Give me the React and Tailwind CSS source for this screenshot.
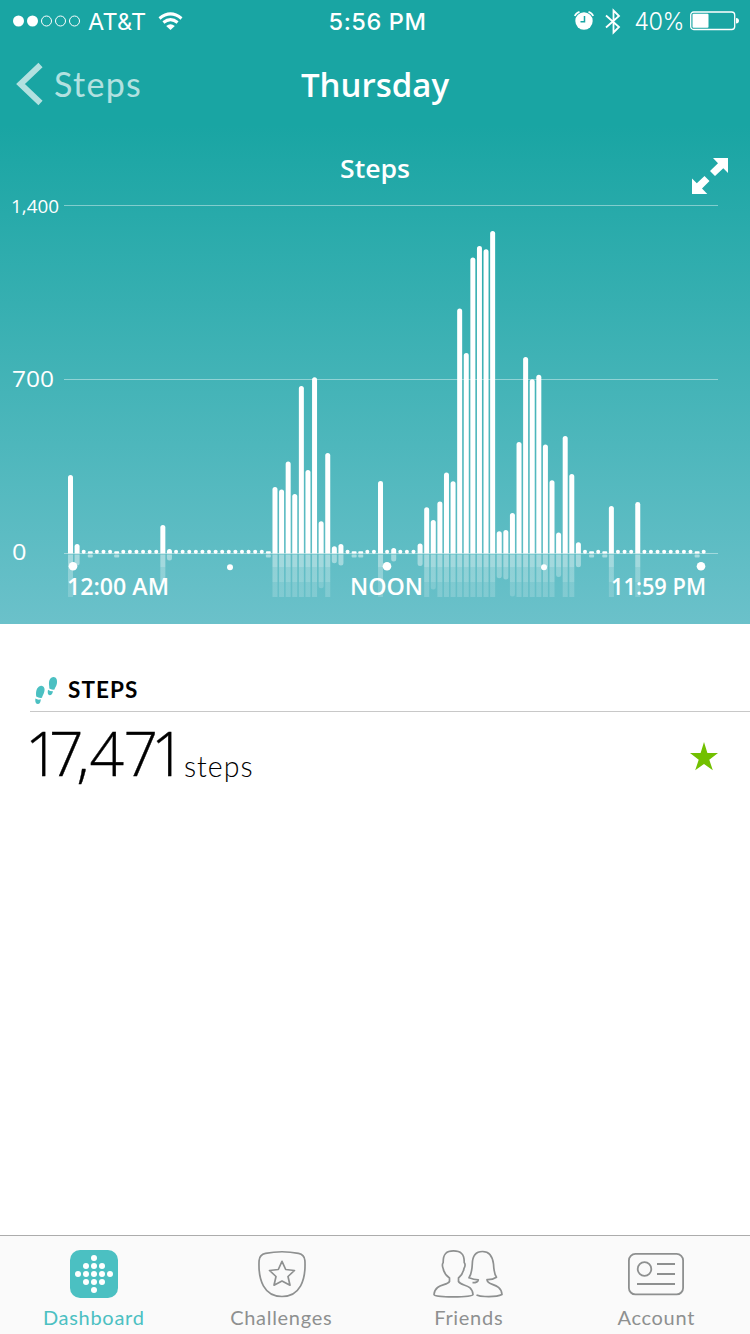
import React from 'react';

const BASE = 553.5;
const FIRST_X = 70.5;
const PITCH = 6.596;

// Top edge of each quarter-hour bar, keyed by its slot; slots left out have no steps.
const TOPS = {
  0: 475, 1: 544, 14: 525, 15: 549, 31: 487, 32: 489.5, 33: 461.5, 34: 494, 35: 386,
  36: 470, 37: 377.3, 38: 521.3, 39: 453, 40: 546.3, 41: 544, 47: 481, 49: 548, 53: 543.5,
  54: 507.3, 55: 520, 56: 501.5, 57: 472.5, 58: 481.3, 59: 308.5, 60: 353, 61: 257.5,
  62: 246, 63: 249.3, 64: 231, 65: 531.3, 66: 530, 67: 513, 68: 442, 69: 357, 70: 379.3,
  71: 374.8, 72: 444.5, 73: 480.3, 74: 532.5, 75: 436, 76: 474, 77: 542.2, 82: 506, 86: 502,
};
const FLATS = [3, 7, 30, 43, 44, 79, 81, 95];

function Bars() {
  return Array.from({ length: 97 }, (_, i) => {
    const cx = FIRST_X + i * PITCH;
    const x = cx - 2.5;
    if (FLATS.includes(i)) {
      return (
        <g key={i} fill="#fff">
          <rect x={x} y="551.3" width="5" height="2.2" rx="1" />
          <rect x={x} y="554.5" width="5" height="3" rx="1" opacity=".45" />
        </g>
      );
    }
    if (!(i in TOPS)) return <circle key={i} cx={cx} cy="551.8" r="2" fill="#fff" />;
    const h = BASE - TOPS[i];
    const r = Math.min(h + 2, 60);
    return (
      <g key={i} fill="#fff">
        <path d={`M${x} ${BASE}V${TOPS[i] + 2.5}a2.5 2.5 0 0 1 5 0V${BASE}z`} />
        <rect x={x} y="550" width="5" height={r + 4} rx="2.5" fill="url(#mirror)" clipPath="url(#below)" />
      </g>
    );
  });
}

function Chart() {
  return (
    <svg viewBox="0 128 750 496" className="block h-[496px] w-[750px]" fontFamily="'Open Sans', sans-serif" fill="#fff">
      <defs>
        <linearGradient id="mirror" gradientUnits="userSpaceOnUse" x1="0" y1="554" x2="0" y2="597">
          <stop offset="0" stopColor="#fff" stopOpacity=".42" />
          <stop offset=".31" stopColor="#fff" stopOpacity=".42" />
          <stop offset=".31" stopColor="#fff" stopOpacity=".29" />
          <stop offset=".65" stopColor="#fff" stopOpacity=".29" />
          <stop offset=".65" stopColor="#fff" stopOpacity=".18" />
          <stop offset="1" stopColor="#fff" stopOpacity=".18" />
        </linearGradient>
        <clipPath id="below"><rect x="0" y="554.5" width="750" height="42.5" /></clipPath>
      </defs>
      <path d="M64 205.5H718M64 379.5H718M64 553.5H718" stroke="#fff" strokeOpacity=".42" />
      <Bars />
      <circle cx="73" cy="566.3" r="4.3" />
      <circle cx="230" cy="567.3" r="3" />
      <circle cx="387" cy="566.3" r="4.3" />
      <circle cx="544" cy="567.3" r="3" />
      <circle cx="701" cy="566.3" r="4.3" />
      <text x="340" y="178" fontSize="26" fontWeight="600" textLength="70" lengthAdjust="spacingAndGlyphs">Steps</text>
      <text x="11" y="213" fontSize="19" textLength="48" lengthAdjust="spacingAndGlyphs">1,400</text>
      <text x="12" y="387" fontSize="22.5" textLength="42" lengthAdjust="spacingAndGlyphs">700</text>
      <text x="12" y="560" fontSize="22.5" textLength="14.5" lengthAdjust="spacingAndGlyphs">0</text>
      <g fontSize="22.5" fontWeight="600">
        <text x="67" y="594.5" textLength="102" lengthAdjust="spacingAndGlyphs">12:00 AM</text>
        <text x="350" y="594.5" textLength="73" lengthAdjust="spacingAndGlyphs">NOON</text>
        <text x="611" y="594.5" textLength="95" lengthAdjust="spacingAndGlyphs">11:59 PM</text>
      </g>
      <path d="M713 158H728V173L723.3 168.3L715 176L710 171L718 163.2zM692 178.5L696.8 183.3L704.5 176L709.5 181L702 188.5L707.3 194H692z" />
    </svg>
  );
}

function StatusBar() {
  return (
    <div className="grid h-10 grid-cols-[1fr_auto_1fr] items-center px-3 pt-px font-['Inter',sans-serif] text-[23.5px] leading-[39px]">
      <div className="flex items-center">
        <svg className="h-5 w-[70px]" viewBox="0 0 70 20" fill="none" stroke="#fff">
          <circle cx="6.5" cy="10" r="5.5" fill="#fff" stroke="none" />
          <circle cx="20.5" cy="10" r="5.5" fill="#fff" stroke="none" />
          <circle cx="34.5" cy="10" r="5" />
          <circle cx="48.5" cy="10" r="5" />
          <circle cx="62.5" cy="10" r="5" />
        </svg>
        <span className="ml-[6px] w-[61px] tracking-[0.2px]">AT&amp;T</span>
        <svg className="ml-[9px] h-[18px] w-[25px]" viewBox="0 0 25 18" fill="none" stroke="#fff" strokeWidth="3">
          <path d="M1.5 6.5Q12.5 -2.7 23.5 6.5M5.4 10.5Q12.5 4.7 19.6 10.5" />
          <path d="M8.2 14Q12.5 10.3 16.8 14L12.5 18z" fill="#fff" stroke="none" />
        </svg>
      </div>
      <div className="pl-[5px] font-medium tracking-[0.6px]">5:56 PM</div>
      <div className="-mr-[2px] flex items-center justify-end">
        <svg className="mr-[11px] h-5 w-5" viewBox="0 0 20 20" fill="none" stroke="#fff">
          <circle cx="10" cy="10" r="8.7" fill="#fff" stroke="none" />
          <path d="M.8 5A7 7 0 0 1 5.5 .9M19.2 5A7 7 0 0 0 14.5 .9" strokeWidth="1.7" />
          <path d="M10.5 5V10.7H6.5" stroke="#18a5a3" strokeWidth="1.5" />
        </svg>
        <svg className="mr-[13px] h-[27px] w-4" viewBox="0 0 16 27" fill="none" stroke="#fff" strokeWidth="1.8">
          <path d="M1 7.5L14 19L8.5 24.5V2.5L14 8L1 19.5" />
        </svg>
        <span className="mr-[6px] mt-px text-[23.5px] font-light tracking-[-0.5px]">40%</span>
        <svg className="h-5 w-[50px]" viewBox="0 0 50 20" fill="none" stroke="#fff">
          <rect x=".7" y="1" width="44" height="17.5" rx="3" strokeWidth="1.3" />
          <rect x="2.5" y="2.8" width="16" height="14" rx="1" fill="#fff" stroke="none" />
          <path d="M46 7q3 .3 3 2.8t-3 2.8z" fill="#fff" stroke="none" />
        </svg>
      </div>
    </div>
  );
}

function NavBar() {
  return (
    <div className="grid h-[88px] grid-cols-[1fr_auto_1fr] items-center px-4 text-[34px] leading-[48px]">
      <div className="flex items-center text-[#b2e1e0]">
        <svg className="h-[44px] w-[28px]" viewBox="0 0 28 44" fill="none" stroke="currentColor" strokeWidth="6">
          <path d="M24.5 3L4.5 22L24.5 41" />
        </svg>
        <span className="ml-[10px] font-['Lato',sans-serif] tracking-[1.3px]">Steps</span>
      </div>
      <div className="mt-px font-['Open_Sans',sans-serif] text-[33px] font-semibold">Thursday</div>
    </div>
  );
}

function DashboardIcon() {
  const dots = [[24, 8], [16, 16], [24, 16], [32, 16], [8, 24], [16, 24], [24, 24], [32, 24], [40, 24], [16, 32], [24, 32], [32, 32], [24, 40]];
  return (
    <svg className="h-12 w-12" viewBox="0 0 48 48">
      <rect width="48" height="48" rx="10" fill="#4bc0c2" />
      {dots.map(([x, y]) => <circle key={`${x}-${y}`} cx={x} cy={y} r="3" fill="#fff" />)}
    </svg>
  );
}

function ChallengesIcon() {
  return (
    <svg className="ml-px h-12 w-12" viewBox="0 0 48 48" fill="none" stroke="#8e9090" strokeWidth="1.7" strokeLinejoin="round">
      <path d="M7.5 3.3Q24 .2 40.5 3.3Q46.5 4.5 46.9 10.5C48 30 42 46.5 24 46.5S0 30 1.1 10.5Q1.5 4.5 7.5 3.3z" />
      <path d="M24 11.3L27.7 19.5L36.5 20.5L30 26.5L32 35.2L24 31L16 35.2L18 26.5L11.5 20.5L20.3 19.5z" />
    </svg>
  );
}

function FriendsIcon() {
  return (
    <svg className="-ml-[2px] h-12 w-[72px]" viewBox="0 0 72 48" fill="none" stroke="#8e9090" strokeWidth="1.7" strokeLinejoin="round">
      <path d="M17.5 28V31.5C15 36 3 33.5 2 44.5C2 47.7 40 47.7 41 44.5C40 33.5 29 36.5 26.5 31.5V28C30 25 31.5 21.5 32 18.5C33.7 15.5 33 13.5 32.2 12.5C32.5 4 28.5 .9 21.5 .9S11 4 11.2 12.5C10 14 10.3 16.5 11.3 19C12 23 14 25.5 17.5 28z" />
      <path d="M40.5 32.7Q46 32.6 46.3 29.8Q42 29.7 37 27.8Q40 23 40.3 14Q40.5 1.5 50.5 1.5Q60 1.5 61.5 14Q62 24 64.5 27.2Q60.5 29.8 55 29.6C54.5 36 69 32.5 70 44.5Q65 47 53 46.5Q48 46.5 44.5 45" />
    </svg>
  );
}

function AccountIcon() {
  return (
    <svg className="h-12 w-14" viewBox="0 0 56 48" fill="none" stroke="#8e9090" strokeWidth="1.8">
      <rect x=".9" y="3.9" width="54.2" height="40.5" rx="6.5" />
      <circle cx="16.5" cy="19" r="6.8" />
      <path d="M29 14H47M29 24H47M9 34H47" />
    </svg>
  );
}

function Tab({ icon, label, active }) {
  return (
    <div className={`flex flex-1 flex-col items-center pt-[14px] font-['Lato',sans-serif] text-xl leading-[30px] ${active ? 'text-[#4bc0c2]' : 'text-[#8e9090]'}`}>
      {icon}
      <span className="mt-1 tracking-[0.7px]">{label}</span>
    </div>
  );
}

function StepsSummary() {
  return (
    <section className="pl-[30px] pt-[50px]">
      <div className="flex h-[38px] items-start border-b border-[#c8c8c8]">
        <svg className="ml-[5px] mt-[3px] h-7 w-[23px]" viewBox="0 0 23 28" fill="#4bc0c2">
          <path d="M6.3 8.7C9.3 9 10.3 12 9.2 15C8.5 17.5 7.5 18.5 7 20.8Q4 21.3 1.2 19.5C.8 16 1 13.5 2.3 11.2Q4 8.5 6.3 8.7z" />
          <path d="M.4 21.5Q3 23.3 5.8 22.3Q5.7 27 2.8 27Q-.3 26.5 .4 21.5z" />
          <path d="M18.3 .1C21.5 0 22.5 3.5 21.9 6.5C21.5 9 20 10.5 19.5 12.5Q16.5 13 14.3 11.5C14.5 9.5 13.7 7.5 14 5Q14.7 .5 18.3 .1z" />
          <path d="M13 12.8Q15.5 14.5 18 14.3Q17.2 18.3 14.7 18.3Q12 17.8 13 12.8z" />
        </svg>
        <h2 className="ml-[10px] font-['Lato',sans-serif] text-[22.5px] font-bold leading-8 tracking-[1.1px] text-black">STEPS</h2>
      </div>
      <div className="flex h-[88px] items-start justify-between pr-[31px]">
        <div className="flex items-start text-black">
          <svg className="-ml-[4px] -mr-[13px] h-[86px] w-[170px] shrink-0" viewBox="0 0 170 86" fontFamily="'Open Sans', sans-serif" fontWeight="300" fontSize="60.5" stroke="#000" strokeWidth=".4">
            <text x="-1 23 50.5 63.5 97.5 125" y="64">17,471</text>
          </svg>
          <span className="ml-px mt-[34px] font-['Lato',sans-serif] text-[28.5px] font-light leading-[40px] tracking-[1px]">steps</span>
        </div>
        <svg className="mt-[29px] h-8 w-[30px]" viewBox="0 0 30 32" fill="#72c000">
          <path d="M15 1L18.4 12.1H29L20.3 18.8L23.8 29.3L15 22.9L6.2 29.3L9.7 18.8L1 12.1H11.6z" />
        </svg>
      </div>
    </section>
  );
}

export default function App() {
  return (
    <main className="flex h-[1334px] w-[750px] flex-col bg-white">
      <header className="bg-[linear-gradient(to_bottom,#19a5a3_0px,#19a5a3_125px,#6bc1ca_624px)] text-white">
        <StatusBar />
        <NavBar />
        <Chart />
      </header>
      <StepsSummary />
      <nav className="mt-auto flex h-[99px] border-t border-[#acacac] bg-[#fafafa]">
        <Tab icon={<DashboardIcon />} label="Dashboard" active />
        <Tab icon={<ChallengesIcon />} label="Challenges" />
        <Tab icon={<FriendsIcon />} label="Friends" />
        <Tab icon={<AccountIcon />} label="Account" />
      </nav>
    </main>
  );
}
